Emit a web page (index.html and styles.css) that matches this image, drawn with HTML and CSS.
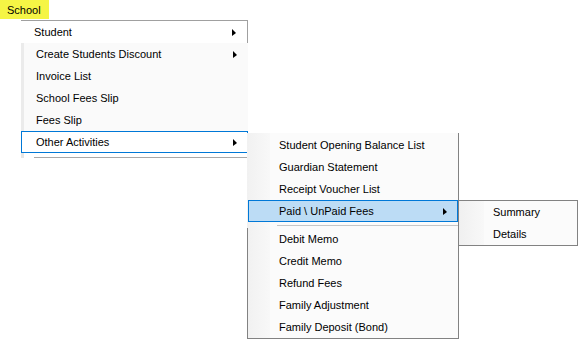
FILE: index.html
```html
<!DOCTYPE html>
<html lang="en">
<head>
    <meta charset="UTF-8">
    <title>School Menu</title>
    <link rel="stylesheet" href="styles.css">
</head>
<body>
    <div class="menubar">
        <span class="top-item">School</span>
    </div>

    <!-- first dropdown -->
    <div class="menu menu-main">
        <div class="item item-first">Student<span class="arrow"></span></div>
        <div class="menu-body">
            <div class="item">Create Students Discount<span class="arrow"></span></div>
            <div class="item">Invoice List</div>
            <div class="item">School Fees Slip</div>
            <div class="item">Fees Slip</div>
            <div class="item item-open">Other Activities<span class="arrow"></span></div>
            <div class="menu-foot"><span class="foot-line"></span></div>
        </div>
    </div>

    <!-- Other Activities -->
    <div class="menu menu-sub">
        <div class="group group-top">
            <div class="item">Student Opening Balance List</div>
            <div class="item">Guardian Statement</div>
            <div class="item">Receipt Voucher List</div>
            <div class="item item-hot">Paid \ UnPaid Fees<span class="arrow"></span></div>
        </div>
        <div class="separator"><span></span></div>
        <div class="group group-bottom">
            <div class="item">Debit Memo</div>
            <div class="item">Credit Memo</div>
            <div class="item">Refund Fees</div>
            <div class="item">Family Adjustment</div>
            <div class="item">Family Deposit (Bond)</div>
        </div>
    </div>

    <!-- Paid \ UnPaid Fees -->
    <div class="menu menu-fees">
        <div class="item">Summary</div>
        <div class="item">Details</div>
    </div>
</body>
</html>
```

FILE: styles.css
```css
body {
    margin: 0;
    padding: 0;
    background: #ffffff;
    font-family: "Liberation Sans", Arial, sans-serif;
    font-size: 11px;
    color: #000;
    width: 586px;
    height: 351px;
    overflow: hidden;
    position: relative;
}

.menubar {
    display: flex;
    height: 19px;
}

.top-item {
    display: flex;
    align-items: center;
    padding: 0 8px 0 7px;
    background: #f5f545;
}

.menu {
    position: absolute;
    box-sizing: border-box;
}

.item {
    display: flex;
    align-items: center;
    justify-content: space-between;
    height: 22px;
    box-sizing: border-box;
    white-space: nowrap;
}

.arrow {
    width: 0;
    height: 0;
    border-left: 4px solid #000;
    border-top: 4px solid transparent;
    border-bottom: 3px solid transparent;
}

/* first dropdown */
.menu-main {
    left: 21px;
    top: 20px;
    width: 227px;
}

.menu-main .item {
    padding: 0 11px 0 15px;
}

.menu-main .item-first {
    height: 23px;
    padding-left: 13px;
    background: #fff;
    border-top: 1px solid #a0a0a0;
    border-right: 1px solid #a0a0a0;
}

.menu-body {
    background: linear-gradient(to right, #ebebeb 0, #ebebeb 3px, #fafafa 3px);
}

.menu-main .item-open {
    background: #fff;
    border: 1px solid #0078d7;
    padding-left: 14px;
    padding-right: 10px;
}

.menu-foot {
    height: 5px;
    display: flex;
    align-items: flex-end;
    background: linear-gradient(to right, #e6e6e6 0, #e6e6e6 3px, #fff 3px);
}

.foot-line {
    margin-left: 13px;
    flex: 1;
    border-bottom: 1px solid #a8a8a8;
}

/* Other Activities submenu */
.menu-sub {
    left: 247px;
    top: 133px;
    width: 212px;
    background: #fbfbfb;
    border-right: 1px solid #828282;
    border-bottom: 1px solid #828282;
}

.group-top {
    padding-top: 1px;
    background: linear-gradient(to right, #f1f1f1 0, #f8f8f8 23px, #fbfbfb 23px);
}

.menu-sub .item {
    padding: 0 10px 0 32px;
}

.menu-sub .item-hot {
    margin-left: 1px;
    padding-left: 30px;
    background: #bcdcf5;
    border: 1px solid #0078d7;
}

.separator {
    height: 6px;
    display: flex;
    align-items: center;
    padding-left: 30px;
    background: linear-gradient(to right, #f1f1f1 0, #f8f8f8 23px, #fbfbfb 23px);
}

.separator span {
    flex: 1;
    border-top: 1px solid #c6c6c6;
}

.group-bottom {
    border-left: 1px solid #828282;
    background: linear-gradient(to right, #f1f1f1 0, #f8f8f8 22px, #fbfbfb 22px);
}

.group-bottom .item {
    padding-left: 31px;
}

/* Paid \ UnPaid Fees submenu */
.menu-fees {
    left: 458px;
    top: 200px;
    width: 120px;
    border: 1px solid #828282;
    background: linear-gradient(to right, #f0f0f0 0, #f8f8f8 25px, #fbfbfb 25px);
}

.menu-fees .item {
    padding-left: 34px;
}
```
